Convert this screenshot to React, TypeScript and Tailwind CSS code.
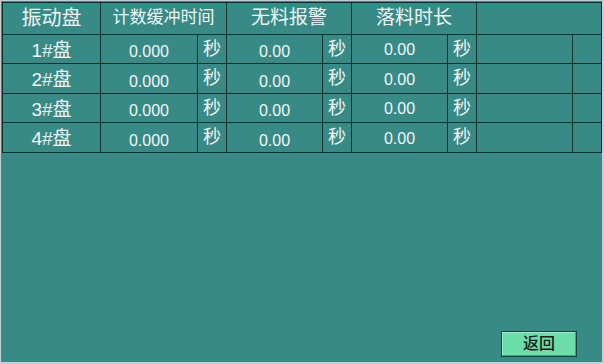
import React from "react";

const cell = "border-r border-b border-[#10302e] flex items-center justify-center leading-none overflow-hidden";
const font = { fontFamily: '"Liberation Sans", "Noto Sans CJK SC", sans-serif' };

const rows = ["1#盘", "2#盘", "3#盘", "4#盘"];

export default function App() {
  return (
    <div className="w-[604px] h-[364px] bg-[#c9cfce] pl-px pt-px pr-[2px] pb-[2px]" style={font}>
      <div className="w-full h-full bg-[#388a86] flex flex-col text-[#f2f6f4]">
        <div className="ml-px mt-px w-[600px] grid grid-cols-[98px_97px_29px_96px_29px_96px_29px_96px_29px] grid-rows-[32px_29px_30px_29px_30px] border-l border-t border-[#10302e]">
          <div className={`${cell} text-[20px] pb-[2px]`}>振动盘</div>
          <div className={`${cell} col-span-2 text-[17px] pb-[2px]`}>计数缓冲时间</div>
          <div className={`${cell} col-span-2 text-[19px] pb-[2px]`}>无料报警</div>
          <div className={`${cell} col-span-2 text-[19px] pb-[2px]`}>落料时长</div>
          <div className={`${cell} col-span-2`}></div>
          {rows.map((r) => (
            <React.Fragment key={r}>
              <div className={`${cell} text-[19px] pt-[2px]`}>{r}</div>
              <div className={`${cell} text-[16px] pt-[6px]`}>0.000</div>
              <div className={`${cell} text-[18px] pb-[1px]`}>秒</div>
              <div className={`${cell} text-[16px] pt-[6px]`}>0.00</div>
              <div className={`${cell} text-[18px] pb-[1px]`}>秒</div>
              <div className={`${cell} text-[16px] pt-[2px]`}>0.00</div>
              <div className={`${cell} text-[18px] pb-[1px]`}>秒</div>
              <div className={cell}></div>
              <div className={cell}></div>
            </React.Fragment>
          ))}
        </div>
        <div className="flex-1" />
        <div className="flex justify-end pr-[25px] pb-[5px]">
          <button className="w-[76px] h-[26px] bg-[#6ddcab] border border-[#24423d] shadow-[inset_-1px_-1px_0_#3fa37c,inset_1px_1px_0_#9af0c9] text-[#1b1b1b] text-[16px] font-medium flex items-center justify-center">
            返回
          </button>
        </div>
      </div>
    </div>
  );
}
